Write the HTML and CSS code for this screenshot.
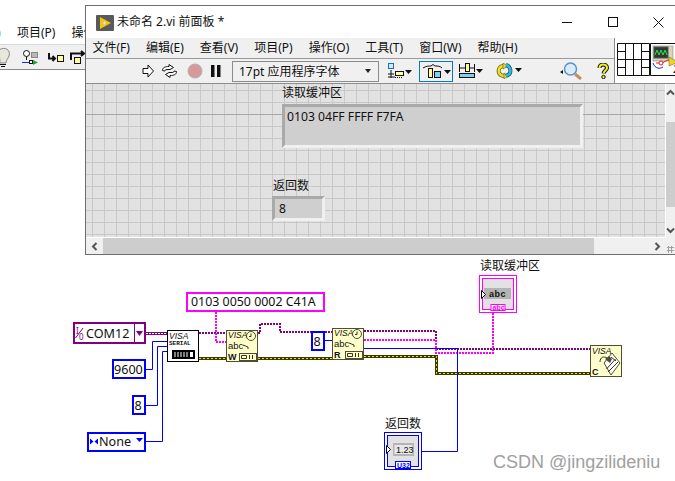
FILE: index.html
```html
<!DOCTYPE html>
<html lang="zh">
<head>
<meta charset="utf-8">
<title>未命名 2.vi 前面板</title>
<link rel="stylesheet" href="styles.css">
</head>
<body>
<div class="desktop">

  <svg class="diagram" width="675" height="481" viewBox="0 0 675 481">
    <!-- wires -->
    <path class="w-chain" d="M146 333.500H167"/>
    <path class="w-chain-in" d="M146 333.500H167"/>
    <path class="w-purple" d="M199 333H226"/>
    <path class="w-purple" d="M258 333H260V324H280V332H332"/>
    <path class="w-purple" d="M364 331H436V349"/>
    <path class="w-purple" d="M436 349H590"/>
    <path class="w-pink" d="M216 312V342H226"/>
    <path class="w-pink" d="M364 340H436V353H493V313"/>
    <path class="w-err-b" d="M199 358.500H226M258 358.500H332M364 356.500H436.500V373.500H590"/>
    <path class="w-err-y" d="M199 358.500H226M258 358.500H332M364 356.500H436.500V373.500H590"/>
    <path class="w-blue" d="M146 369.500H152.500V341.500H167M146 405.500H157.500V346.500H167M146 441.500H162.500V351.500H167M324 340.500H332M364 348.500H457.500V451.500H422"/>

    <!-- VISA resource constant -->
    <rect class="c-purple" x="74" y="323" width="71" height="20"/>
    <path class="line-purple" d="M134.500 324V342"/>
    <text class="t-small" x="76" y="334">I</text>
    <path class="line-purple" d="M75.500 338L83 328"/>
    <text class="t-small" x="79" y="340">0</text>
    <text class="t-const" x="86" y="337.500">COM12</text>
    <path class="fill-purple" d="M136 331H143L139.500 336Z"/>

    <!-- numeric constants -->
    <rect class="c-blue" x="113" y="360" width="32" height="18"/>
    <text class="t-const" x="114" y="374">9600</text>
    <rect class="c-blue" x="133" y="396" width="12" height="18"/>
    <text class="t-const" x="134.500" y="410">8</text>
    <rect class="c-blue" x="88" y="433" width="57" height="18"/>
    <path class="fill-blue" d="M93.500 441.500L90 438.500V444.500ZM94.500 441.500L98 438.500V444.500Z"/>
    <text class="t-const" x="99" y="446">None</text>
    <path class="fill-blue" d="M136 438H143L139.500 442Z"/>
    <rect class="c-blue" x="312" y="332" width="12" height="18"/>
    <text class="t-const" x="313.500" y="346">8</text>

    <!-- string constant -->
    <rect class="c-pink" x="187" y="293" width="137" height="18"/>
    <text class="t-const2" x="191" y="306">0103 0050 0002 C41A</text>

    <!-- VISA Serial -->
    <rect class="n-white" x="167.500" y="330.500" width="31" height="31"/>
    <text class="t-visa" x="169" y="338.500">VISA</text>
    <text class="t-serial" x="169" y="344.500">SERIAL</text>
    <rect class="n-black" x="172" y="350" width="23" height="9"/>
    <path class="n-stripes" d="M175 352V357M178 352V357M181 352V357M184 352V357M187 352V357"/>
    <rect class="n-glint" x="190" y="352" width="3" height="5"/>

    <!-- VISA Write -->
    <rect class="n-beige" x="226.500" y="330.500" width="31" height="31"/>
    <text class="t-visa" x="228" y="337.500">VISA</text>
    <circle class="clock" cx="251" cy="336" r="4.500"/>
    <path class="thin" d="M251 333.500V336.500H249"/>
    <text class="t-abc" x="228" y="348.500">abc</text>
    <path class="thin" d="M243 345L248 347V349"/>
    <text class="t-letter" x="228" y="360">W</text>
    <rect class="clock" x="239.500" y="353.500" width="17" height="7"/>
    <path class="thin" d="M241.500 355.500H246.500V358.500H241.500ZM249.500 355V359M252.500 355V359"/>

    <!-- VISA Read -->
    <rect class="n-beige" x="332.500" y="328.500" width="31" height="31"/>
    <text class="t-visa" x="334" y="335.500">VISA</text>
    <circle class="clock" cx="357" cy="334" r="4.500"/>
    <path class="thin" d="M357 331.500V334.500H355"/>
    <text class="t-abc" x="334" y="346.500">abc</text>
    <path class="thin" d="M349 343L354 345V347"/>
    <text class="t-letter" x="334" y="358">R</text>
    <rect class="clock" x="345.500" y="351.500" width="17" height="7"/>
    <path class="thin" d="M347.500 353.500H352.500V356.500H347.500ZM355.500 353V357M358.500 353V357"/>

    <!-- VISA Close -->
    <rect class="n-beige" x="590.500" y="345.500" width="31" height="31"/>
    <text class="t-visa" x="592" y="353.500">VISA</text>
    <text class="t-letter" x="592" y="375">C</text>
    <path class="n-paper" d="M604 363L612 353L620 363L611 375Z"/>
    <path class="thin" d="M600 362C600 357 604 356 607 358L611 361M611 357L616 361M608 372L618 362M606.500 369L615.500 359"/>
    <path class="hand" d="M605 359L609 356L612 359L610 363Z"/>

    <!-- string indicator -->
    <text class="t-label" x="480" y="270">读取缓冲区</text>
    <rect class="term-pink" x="479.500" y="275.500" width="37" height="37"/>
    <rect class="term-pink-in" x="482.500" y="278.500" width="31" height="31"/>
    <rect class="term-field" x="484" y="288" width="27" height="11"/>
    <text class="t-abc-b" x="489" y="297">abc</text>
    <path class="term-arrow" d="M481.500 290.500L485.500 294.500L481.500 298.500Z"/>
    <rect class="term-tab-pink" x="491" y="304.500" width="14" height="6"/>
    <text class="t-tab-pink" x="492.500" y="310">abc</text>

    <!-- numeric indicator -->
    <text class="t-label" x="385" y="428">返回数</text>
    <rect class="term-blue" x="384.500" y="432.500" width="37" height="37"/>
    <rect class="term-blue-in" x="387.500" y="435.500" width="31" height="31"/>
    <rect class="term-field" x="393" y="443" width="21" height="13"/>
    <rect class="term-white" x="394.500" y="445" width="18" height="9"/>
    <text class="t-num" x="396" y="453">1.23</text>
    <path class="term-arrow" d="M386.500 445.500L390.500 449.500L386.500 453.500Z"/>
    <rect class="term-tab-blue" x="395.500" y="461.500" width="15" height="7"/>
    <text class="t-tab-blue" x="397" y="468">U32</text>

    <text class="t-mark" x="493" y="468">CSDN @jingzilideniu</text>
  </svg>

  <section class="bgwin">
    <div class="bg-menu">
      <span class="bg-clip">)</span>
      <span>项目(P)</span>
      <span>操作(O)</span>
    </div>
    <div class="bg-tools">
      <svg class="bg-icons" width="85" height="24" viewBox="0 45 85 24">
        <path class="bulb" d="M-1 50C5 46 11 50 9 56C8 59 6 60 6 63H0Z"/>
        <path class="ink" d="M0 64.500H6M1 66.500H5"/>
        <circle class="plain" cx="26.500" cy="53.500" r="3"/>
        <path class="ink" d="M26.500 56.500V60"/>
        <rect class="gray-f" x="31.500" y="52.500" width="6" height="5"/>
        <path class="blue-l" d="M22 62.500H30"/>
        <rect class="plain" x="29.500" y="60.500" width="3" height="3"/>
        <path class="green-f" d="M33 60L38 62.500L33 65Z"/>
        <path class="ink2" d="M49 53V58.500H55M52.500 56L55 58.500L52.500 61"/>
        <rect class="yellow" x="57.500" y="55.500" width="6" height="6"/>
        <path class="ink2" d="M71 60V53.500H83M81 51L84 53.500L81 56"/>
        <rect class="yellow" x="74.500" y="57.500" width="6" height="6"/>
      </svg>
    </div>
  </section>

  <section class="win">
    <header class="titlebar">
      <svg class="appicon" width="18" height="16" viewBox="0 0 18 16">
        <rect class="app-bg" width="18" height="16" rx="1"/>
        <path class="app-play" d="M4 2L15 8L4 14Z"/>
        <path class="app-mark" d="M7 8H10M8.500 6.500V9.500"/>
      </svg>
      <h1 class="title">未命名 2.vi 前面板 *</h1>
      <div class="winbtns">
        <svg width="11" height="11" viewBox="0 0 11 11"><path class="winstroke" d="M0 5.500H10"/></svg>
        <svg width="11" height="11" viewBox="0 0 11 11"><rect class="winstroke" x="0.500" y="0.500" width="9" height="9"/></svg>
        <svg width="11" height="11" viewBox="0 0 11 11"><path class="winstroke" d="M0.500 0.500L10.500 10.500M10.500 0.500L0.500 10.500"/></svg>
      </div>
    </header>

    <div class="chrome">
      <div class="bars">
        <nav class="menu">
          <span>文件(F)</span><span>编辑(E)</span><span>查看(V)</span><span>项目(P)</span><span>操作(O)</span><span>工具(T)</span><span>窗口(W)</span><span>帮助(H)</span>
        </nav>
        <div class="tools">
          <svg class="ic-run" width="12" height="14" viewBox="0 0 12 14"><path class="arrow-o" d="M1 4.500H6V1L11.500 7L6 13V9.500H1Z"/></svg>
          <svg class="ic-cont" width="17" height="14" viewBox="0 0 17 14"><path class="arrow-o" d="M1.500 6.500C1.500 3.500 4 2.500 8 2.500V0.500L12.500 3.500L9 5.500H6C4.500 5.500 4 6 4 7ZM15.500 7.500C15.500 10.500 13 11.500 9 11.500V13.500L4.500 10.500L8 8.500H11C12.500 8.500 13 8 13 7Z"/></svg>
          <svg class="ic-stop" width="16" height="16" viewBox="0 0 16 16"><circle class="stop" cx="8" cy="8" r="7"/></svg>
          <svg class="ic-pause" width="10" height="12" viewBox="0 0 10 12"><path class="pause" d="M0 0H3.500V12H0ZM6 0H9.500V12H6Z"/></svg>
          <div class="fontsel"><span>17pt 应用程序字体</span><i class="caret"></i></div>
          <svg class="ic-align" width="24" height="16" viewBox="0 0 24 16">
            <rect class="blue-o" x="0.500" y="0.500" width="5" height="5"/>
            <path class="ink" d="M3 7V15M0 11H6M0 14H7"/>
            <rect class="yellow" x="7.500" y="8.500" width="8" height="4"/>
            <path class="dots" d="M7 14.500H15"/>
            <path class="ink-f" d="M17 7H24L20.500 11Z"/>
          </svg>
          <div class="tool-on">
            <svg width="32" height="16" viewBox="0 0 32 16">
              <path class="ink" d="M3 5C6 3 9 3 11 3L13 1.500L15 3C18 3 20 3 22 5"/>
              <rect class="yellow" x="8.500" y="5.500" width="4" height="9"/>
              <rect class="bluefill" x="14.500" y="8.500" width="6" height="6"/>
              <path class="ink-f" d="M24 7H31L27.500 11Z"/>
            </svg>
          </div>
          <svg class="ic-res" width="24" height="16" viewBox="0 0 24 16">
            <rect class="bluefill" x="0.500" y="10.500" width="15" height="4"/>
            <rect class="yellow" x="6.500" y="0.500" width="4" height="8"/>
            <path class="ink" d="M0.500 1V9M15.500 1V9M1 5H6M11 5H15"/>
            <path class="ink-f" d="M17 6H24L20.500 10Z"/>
          </svg>
          <svg class="ic-order" width="26" height="16" viewBox="0 0 26 16">
            <path class="y-out" d="M8 3C3 3 2 7 3 10C4 12 6 13 9 13"/>
            <path class="y-arc" d="M8 3C3 3 2 7 3 10C4 12 6 13 9 13"/>
            <path class="y-head" d="M7 0L12 3L7 6ZM8 10L12 13L8 16Z"/>
            <path class="b-out" d="M10 2C14 3 15 7 14 10C13 12 12 12 10 13"/>
            <path class="b-arc" d="M10 2C14 3 15 7 14 10C13 12 12 12 10 13"/>
            <path class="ink-f" d="M19 5H26L22.500 9Z"/>
          </svg>
          <svg class="ic-find" width="23" height="18" viewBox="0 0 23 18">
            <path class="ink-f" d="M0 10L3 8V12Z"/>
            <path class="mag-h" d="M15 12L21 17"/>
            <circle class="mag" cx="10.500" cy="7" r="6"/>
          </svg>
          <svg class="ic-help" width="12" height="16" viewBox="0 0 12 16">
            <path class="q-out" d="M2.500 5C2.500 3 4 1.500 6 1.500C8.500 1.500 10 3 10 5C10 7 7 7.500 6.500 10.500"/>
            <path class="q-in" d="M2.500 5C2.500 3 4 1.500 6 1.500C8.500 1.500 10 3 10 5C10 7 7 7.500 6.500 10.500"/>
            <circle class="q-dot" cx="6.500" cy="14" r="1.700"/>
          </svg>
        </div>
      </div>
      <aside class="panes">
        <svg class="conn" width="33" height="33" viewBox="0 0 33 33">
          <path class="conn-l" d="M0.500 0.500H32.500V32.500H0.500ZM8.500 0.500V32.500M16.500 0.500V32.500M24.500 0.500V32.500M0.500 8.500H8.500M0.500 16.500H32.500M0.500 24.500H8.500M24.500 8.500H32.500M24.500 24.500H32.500"/>
        </svg>
        <svg class="vi-ic" width="26" height="33" viewBox="0 0 26 33">
          <path class="conn-l" d="M26 0.500H0.500V32.500H26"/>
          <rect class="scope-p" x="3" y="3" width="20" height="15"/>
          <rect class="scope-b" x="4" y="4" width="14" height="11"/>
          <path class="scope-g" d="M5 12L7 7L9 12L11 7L13 12L15 7L17 12"/>
          <path class="scope-r" d="M6 20H12L18 17H22"/>
          <circle class="scope-rc" cx="11" cy="20" r="2"/>
          <path class="scope-bl" d="M3 20C5 26 10 26 13 24"/>
          <path class="app-play2" d="M19 14L26 18V20L19 23Z"/>
          <text class="t-two" x="23" y="30">2</text>
        </svg>
      </aside>
    </div>

    <div class="work">
      <div class="canvas">
        <div class="guide"></div>
        <span class="fp-label lab-read">读取缓冲区</span>
        <div class="ind ind-read">0103 04FF FFFF F7FA</div>
        <span class="fp-label lab-num">返回数</span>
        <div class="ind ind-num">8</div>
      </div>
      <div class="vbar">
        <svg class="chev" width="9" height="7" viewBox="0 0 9 7"><path class="chev-l" d="M1 5.500L4.500 2L8 5.500"/></svg>
        <div class="vthumb"></div>
        <svg class="chev" width="9" height="7" viewBox="0 0 9 7"><path class="chev-l" d="M1 1.500L4.500 5L8 1.500"/></svg>
      </div>
    </div>
    <div class="hbar">
      <svg class="chev" width="7" height="9" viewBox="0 0 7 9"><path class="chev-l" d="M5.500 1L2 4.500L5.500 8"/></svg>
      <div class="hthumb"></div>
      <svg class="chev" width="7" height="9" viewBox="0 0 7 9"><path class="chev-l" d="M1.500 1L5 4.500L1.500 8"/></svg>
      <div class="grip"></div>
    </div>
  </section>
</div>
</body>
</html>
```
FILE: styles.css
```css
* { box-sizing: border-box; }
html, body { margin: 0; padding: 0; background: #fff; }
body { font-family: "Noto Sans", "Noto Sans CJK SC", sans-serif; color: #111; }
.desktop { position: relative; width: 675px; height: 481px; overflow: hidden; background: #fff; }

/* block diagram */
.diagram { position: absolute; left: 0; top: 0; }
.diagram path, .diagram rect, .diagram circle { fill: none; }
.diagram text { font-family: "Noto Sans", "Noto Sans CJK SC", sans-serif; fill: #111; }
.diagram .w-chain { stroke: #800080; stroke-width: 3; }
.diagram .w-chain-in { stroke: #fff; stroke-width: 1; stroke-dasharray: 2 1; }
.diagram .w-purple { stroke: #800080; stroke-width: 2; stroke-dasharray: 2 1; }
.diagram .w-pink { stroke: #ff00ff; stroke-width: 2; stroke-dasharray: 2 1; }
.diagram .w-err-b { stroke: #3a3a00; stroke-width: 3; }
.diagram .w-err-y { stroke: #e8e800; stroke-width: 1; stroke-dasharray: 2 2; }
.diagram .w-blue { stroke: #0000ff; stroke-width: 1; }
.diagram .c-purple { fill: #fff; stroke: #800080; stroke-width: 2; }
.diagram .c-blue { fill: #fff; stroke: #0000ff; stroke-width: 2; }
.diagram .c-pink { fill: #fff; stroke: #ff00ff; stroke-width: 2; }
.diagram .line-purple { stroke: #800080; stroke-width: 1; }
.diagram .fill-purple { fill: #800080; }
.diagram .fill-blue { fill: #0000ff; }
.diagram .t-small { font-size: 8px; fill: #800080; }
.diagram .t-const { font-size: 12.600px; }
.diagram .t-const2 { font-size: 12.400px; }
.diagram .t-label { font-size: 12px; }
.diagram .t-visa { font-family: "Liberation Sans", sans-serif; font-size: 8.500px; font-style: italic; }
.diagram .t-serial { font-family: "Liberation Mono", monospace; font-size: 6px; font-weight: 700; }
.diagram .t-abc { font-family: "Liberation Sans", sans-serif; font-size: 9.500px; }
.diagram .t-abc-b { font-family: "Liberation Sans", sans-serif; font-size: 9px; font-weight: 700; letter-spacing: 0.500px; }
.diagram .t-letter { font-family: "Liberation Sans", sans-serif; font-size: 9px; font-weight: 700; }
.diagram .t-num { font-family: "Liberation Sans", sans-serif; font-size: 9px; }
.diagram .t-tab-pink { font-family: "Liberation Sans", sans-serif; font-size: 7px; font-weight: 700; fill: #ff00ff; }
.diagram .t-tab-blue { font-family: "Liberation Sans", sans-serif; font-size: 7px; font-weight: 700; fill: #0000ff; }
.diagram .t-mark { font-family: "Liberation Sans", sans-serif; font-size: 18px; fill: #a0a0a0; }
.diagram .n-white { fill: #fff; stroke: #000; stroke-width: 1; }
.diagram .n-black { fill: #000; }
.diagram .n-stripes { stroke: #fff; stroke-width: 1; }
.diagram .n-glint { fill: #fff; }
.diagram .n-beige { fill: #ffffcc; stroke: #4d4d33; stroke-width: 1; }
.diagram .n-paper { fill: #fff; stroke: #4d4d33; stroke-width: 1; }
.diagram .hand { fill: #4d4d33; }
.diagram .clock { stroke: #4d4d33; stroke-width: 1; fill: #ffffcc; }
.diagram .thin { stroke: #33331f; stroke-width: 1; }
.diagram .term-pink, .diagram .term-pink-in { stroke: #ff00ff; stroke-width: 1; }
.diagram .term-pink { fill: #fff; }
.diagram .term-pink-in { fill: #e2e2e2; }
.diagram .term-blue, .diagram .term-blue-in { stroke: #0000ff; stroke-width: 1; }
.diagram .term-blue { fill: #fff; }
.diagram .term-blue-in { fill: #e2e2e2; }
.diagram .term-field { fill: #b4b4b4; }
.diagram .term-white { fill: #e8e8e8; }
.diagram .term-arrow { fill: #fff; stroke: #000; stroke-width: 1; }
.diagram .term-tab-pink { fill: #fff; stroke: #ff00ff; stroke-width: 1; }
.diagram .term-tab-blue { fill: #fff; stroke: #0000ff; stroke-width: 1; }

/* window behind */
.bgwin { position: absolute; left: 0; top: 23px; width: 85px; font-size: 12px; }
.bg-menu { position: relative; height: 22px; padding-left: 17px; line-height: 19px; display: flex; gap: 16px; white-space: nowrap; overflow: hidden; background: #fff; border-bottom: 1px solid #d9d9d9; }
.bg-clip { position: absolute; left: -3px; top: 0; color: #223; }
.bg-tools { height: 25px; background: #f0f0f0; border-bottom: 1px solid #8a8a8a; }
.bg-icons { display: block; }
.bulb { fill: #e8e8d8; stroke: #888; stroke-width: 1; }
.ink { fill: none; stroke: #111; stroke-width: 1; }
.ink2 { fill: none; stroke: #111; stroke-width: 2; }
.ink-f { fill: #111; }
.dots { fill: none; stroke: #111; stroke-width: 1; stroke-dasharray: 1 1; }
.blue-o { fill: #cfeefa; stroke: #1a6fb0; stroke-width: 1; }
.gray-f { fill: #b8b8b8; stroke: #888; stroke-width: 1; }
.blue-l { fill: none; stroke: #1030d0; stroke-width: 1; }
.plain { fill: #fff; stroke: #111; stroke-width: 1; }
.green-f { fill: #10b030; }
.yellow { fill: #ffffa0; stroke: #111; stroke-width: 1; }

/* front panel window */
.win { position: absolute; left: 85px; top: 5px; width: 590px; height: 250px; background: #fff; border: 1px solid #6e6e6e; border-right: 0; display: flex; flex-direction: column; }
.titlebar { height: 32px; flex: none; display: flex; align-items: center; padding-left: 10px; background: #fff; }
.appicon { flex: none; margin-right: 3px; margin-top: 1px; }
.app-bg { fill: #5a5a5a; }
.app-play { fill: #f2c318; }
.app-mark { stroke: #e8ecff; stroke-width: 1; fill: none; }
.title { margin: 0; font-size: 12px; font-weight: 400; line-height: 20px; color: #111; white-space: nowrap; }
.winbtns { margin-left: auto; margin-right: 11px; display: flex; gap: 34.500px; align-items: center; }
.winbtns svg { display: block; }
.winstroke { fill: none; stroke: #111; stroke-width: 1; }

.chrome { height: 46px; flex: none; display: flex; border-bottom: 1px solid #8c8c8c; }
.bars { width: 529px; flex: none; display: flex; flex-direction: column; border-right: 1px solid #8c8c8c; }
.menu { height: 21px; flex: none; display: flex; gap: 16px; padding-left: 6.500px; background: #f0f0f0; border-bottom: 1px solid #9a9a9a; font-size: 12px; line-height: 20px; white-space: nowrap; }
.tools { flex: 1; display: flex; align-items: center; background: #f0f0f0; padding-left: 56px; }
.ic-run { margin-right: 7px; }
.ic-cont { margin-right: 9px; }
.ic-stop { margin-right: 8px; }
.stop { fill: #d79a9a; stroke: #b0b0b0; stroke-width: 1; }
.ic-pause { margin-right: 11px; }
.pause { fill: #111; }
.arrow-o { fill: #fff; stroke: #111; stroke-width: 1; }
.fontsel { width: 147px; height: 21px; display: flex; align-items: center; justify-content: space-between; padding: 0 7px 0 6px; border: 1px solid #8c8c8c; font-size: 12px; white-space: nowrap; margin-right: 9px; }
.caret { width: 0; height: 0; border-left: 3.500px solid transparent; border-right: 3.500px solid transparent; border-top: 4px solid #222; }
.ic-align { margin-right: 7px; }
.tool-on { width: 34px; height: 21px; border: 1px solid #0078d7; display: flex; align-items: center; justify-content: center; margin-right: 6px; }
.tool-on svg { display: block; }
.bluefill { fill: #7fd0ee; stroke: #111; stroke-width: 1; }
.ic-res { margin-right: 13px; }
.ic-order { margin-right: 38px; }
.y-out { fill: none; stroke: #6a6a20; stroke-width: 4; }
.y-arc { fill: none; stroke: #f0e020; stroke-width: 2.500; }
.y-head { fill: #f0e020; stroke: #6a6a20; stroke-width: 0.700; }
.b-out { fill: none; stroke: #0f5f80; stroke-width: 4; }
.b-arc { fill: none; stroke: #39b5d8; stroke-width: 2.500; }
.ic-find { margin-right: 14px; }
.mag { fill: #d8ecff; stroke: #5f90c0; stroke-width: 1.500; }
.mag-h { fill: none; stroke: #c49058; stroke-width: 3; }
.q-out { fill: none; stroke: #111; stroke-width: 4; }
.q-in { fill: none; stroke: #f6ee20; stroke-width: 2; }
.q-dot { fill: #f6ee20; stroke: #111; stroke-width: 1; }

.panes { flex: 1; display: flex; gap: 0; padding: 5px 0 0 2px; background: #fff; }
.conn { display: block; flex: none; }
.vi-ic { display: block; flex: none; }
.conn-l { fill: none; stroke: #111; stroke-width: 1; }
.scope-b { fill: #2e3a30; stroke: #555; stroke-width: 1; }
.scope-g { fill: none; stroke: #30e050; stroke-width: 1; }
.scope-p { fill: #d8d8b8; stroke: #777; stroke-width: 0.500; }
.scope-r { fill: none; stroke: #e02020; stroke-width: 1; }
.scope-rc { fill: #fff; stroke: #e02020; stroke-width: 1; }
.scope-bl { fill: none; stroke: #1030c0; stroke-width: 1; }
.app-play2 { fill: #f2d318; stroke: #555; stroke-width: 0.500; }
.t-two { font-size: 10px; fill: #111; }

.work { flex: 1; display: flex; min-height: 0; }
.canvas { position: relative; flex: 1; overflow: hidden; margin: 0 1px 1px 0; background-color: #e2e2e2; background-image: linear-gradient(#c8c8c8 1px, transparent 1px), linear-gradient(90deg, #c8c8c8 1px, transparent 1px); background-size: 12px 12px; background-position: 0 6px, 6px 0; }
.guide { position: absolute; left: 0; right: 0; top: 30px; height: 1px; background: #a8a8a8; }
.fp-label { position: absolute; font-size: 12px; line-height: 16px; white-space: nowrap; color: #111; }
.lab-read { left: 196px; top: 1px; }
.lab-num { left: 187px; top: 94px; }
.ind { position: absolute; background: #cfcfcf; color: #111; font-size: 12.200px; line-height: 16px; border-style: solid; border-width: 3px; border-color: #a9a9a9 #f0f0f0 #f0f0f0 #a9a9a9; }
.ind-read { left: 196px; top: 20px; width: 301px; height: 44px; padding: 2px 0 0 2px; white-space: nowrap; }
.ind-num { left: 186px; top: 112px; width: 53px; height: 25px; padding: 2px 0 0 4px; }

.vbar { width: 9px; flex: none; background: #f0f0f0; display: flex; flex-direction: column; align-items: center; justify-content: space-between; padding: 5px 0 4px; position: relative; }
.vthumb { position: absolute; left: 0; right: 0; top: 38px; height: 85px; background: #cdcdcd; }
.chev { display: block; flex: none; }
.chev-l { fill: none; stroke: #555; stroke-width: 2; }
.hbar { height: 16px; flex: none; position: relative; display: flex; align-items: center; justify-content: space-between; padding: 0 14px 0 5px; background: #f0f0f0; }
.hthumb { position: absolute; left: 17px; width: 491px; top: 0; bottom: 0; background: #cdcdcd; }
.grip { position: absolute; right: 1px; bottom: 1px; width: 7px; height: 7px; background-image: radial-gradient(#a0a0a0 1px, transparent 1.200px); background-size: 3px 3px; }
```
